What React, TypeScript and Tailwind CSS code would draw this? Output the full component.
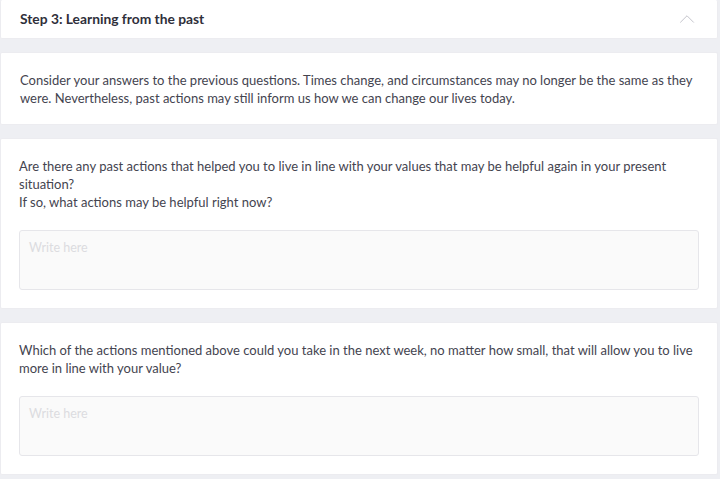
import React from 'react';
import { ChevronUp } from 'lucide-react';

const questions = [
  {
    id: 'q1',
    lines: [
      'Are there any past actions that helped you to live in line with your values that may be helpful again in your present',
      'situation?',
      'If so, what actions may be helpful right now?',
    ],
  },
  {
    id: 'q2',
    lines: [
      'Which of the actions mentioned above could you take in the next week, no matter how small, that will allow you to live',
      'more in line with your value?',
    ],
  },
];

const Card: React.FC<{ children: React.ReactNode; className?: string }> = ({ children, className = '' }) => (
  <div className={`bg-white border border-[#ececf0] rounded-[2px] ${className}`}>{children}</div>
);

export default function App() {
  return (
    <div
      className="w-[720px] h-[479px] bg-[#eeeff3] pr-[2px] text-[13px] leading-[18px] text-[#44444f] flex flex-col gap-[13px] overflow-hidden"
      style={{ fontFamily: 'Lato, "Open Sans", sans-serif' }}
    >
      {/* Header */}
      <Card className="h-[39px] flex items-center justify-between pl-[19px] pr-[17px] border-t-0">
        <h2 className="font-bold text-[13.8px] text-[#2f2f3a]">Step 3: Learning from the past</h2>
        <ChevronUp size={26} strokeWidth={0.9} className="text-[#c2c2ca]" />
      </Card>

      {/* Intro */}
      <Card className="px-[19px] pt-[18px] pb-[17px]">
        <p>
          Consider your answers to the previous questions. Times change, and circumstances may no longer be the same as they
          <br />
          were. Nevertheless, past actions may still inform us how we can change our lives today.
        </p>
      </Card>

      {questions.map((q) => (
        <Card key={q.id} className="px-[18px] pt-[18px] pb-[18px]">
          <p>
            {q.lines.map((line, i) => (
              <React.Fragment key={i}>
                {line}
                {i < q.lines.length - 1 && <br />}
              </React.Fragment>
            ))}
          </p>
          <textarea
            placeholder="Write here"
            className="mt-[19px] block w-full h-[60px] resize-none rounded-[3px] border border-[#e6e6ea] bg-[#fafafa] px-[9px] py-[8px] text-[12.5px] text-[#3e3e4b] placeholder:text-[#dcdce0] outline-none"
            style={{ fontFamily: 'Lato, "Open Sans", sans-serif' }}
          />
        </Card>
      ))}
    </div>
  );
}
